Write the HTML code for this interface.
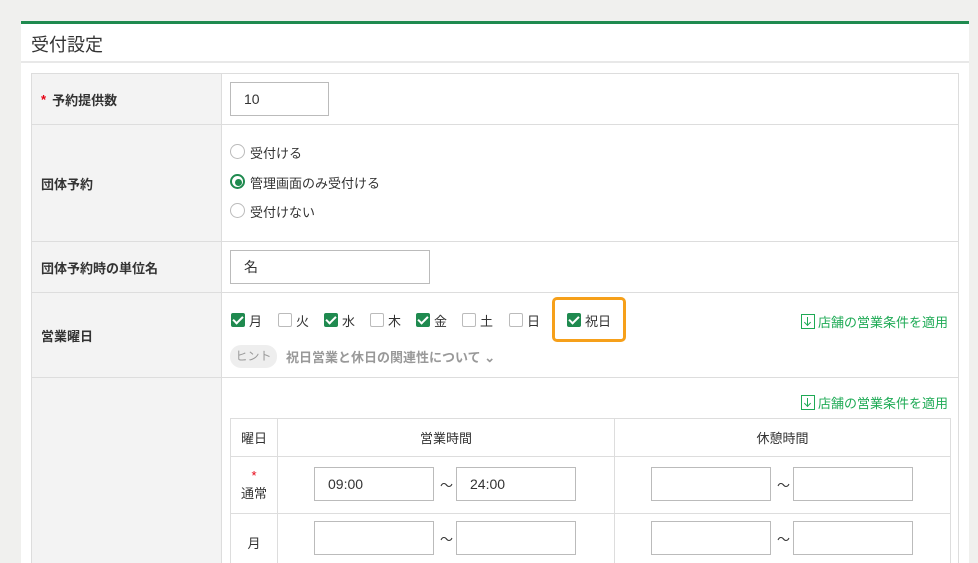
<!DOCTYPE html>
<html><head><meta charset="utf-8"><style>
*{box-sizing:border-box;margin:0;padding:0}
html,body{width:978px;height:563px;overflow:hidden}
body{background:#f0f0ee;font-family:"Liberation Sans","Noto Sans CJK JP",sans-serif;font-size:13px;color:#333;position:relative}
.abs{position:absolute}
.card{left:21px;top:21px;width:948px;height:542px;background:#fff;border-top:3px solid #1f8a4f}
.title{left:31px;top:31px;font-size:18px;color:#333}
.sep{left:21px;top:61px;width:948px;height:2px;background:#e8e8e8}
.lab{background:#f3f3f3;border:1px solid #ddd;font-weight:bold;font-size:13px;display:flex;align-items:center;padding-left:9px}
.val{border:1px solid #ddd;border-left:none}
.inp{border:1px solid #bbb;background:#fff;font-size:14px;padding-left:13px;display:flex;align-items:center}
.radio{width:15px;height:15px;border:1.5px solid #bbb;border-radius:50%}
.cb{width:14px;height:14px;border:1.5px solid #bbb;border-radius:2px}
.cbon{width:14px;height:14px;background:#1f8a4f;border-radius:2px}
.cbon:after{content:"";position:absolute;left:4px;top:1px;width:4px;height:8px;border:solid #fff;border-width:0 2px 2px 0;transform:rotate(45deg)}
.link{color:#1eaa55;font-size:13px;display:flex;align-items:center}
.lico{display:inline-block;width:14px;height:15px;border:1.5px solid #1eaa55;margin-right:3px;position:relative}
.lico:before{content:"";position:absolute;left:4.5px;top:2px;width:1.5px;height:8px;background:#1eaa55}
.lico:after{content:"";position:absolute;left:2.5px;top:5px;width:4px;height:4px;border:solid #1eaa55;border-width:0 1.5px 1.5px 0;transform:rotate(45deg)}
td{border:1px solid #ddd;text-align:center}
</style></head><body>
<div class="abs card"></div>
<div class="abs title">受付設定</div>
<div class="abs sep"></div>

<div class="abs lab" style="left:31px;top:73px;width:191px;height:52px"><span style="color:#e60012;margin-right:6px">*</span>予約提供数</div>
<div class="abs val" style="left:221px;top:73px;width:738px;height:52px"></div>
<div class="abs inp" style="left:230px;top:82px;width:99px;height:34px">10</div>

<div class="abs lab" style="left:31px;top:124px;width:191px;height:118px">団体予約</div>
<div class="abs val" style="left:221px;top:124px;width:738px;height:118px"></div>
<div class="abs radio" style="left:230px;top:144px"></div><div class="abs" style="left:250px;top:143px">受付ける</div>
<div class="abs radio" style="left:230px;top:174px;border-color:#1f8a4f;border-width:2px"><div style="position:absolute;left:2.5px;top:2.5px;width:7px;height:7px;border-radius:50%;background:#1f8a4f"></div></div><div class="abs" style="left:250px;top:173px">管理画面のみ受付ける</div>
<div class="abs radio" style="left:230px;top:203px"></div><div class="abs" style="left:250px;top:202px">受付けない</div>

<div class="abs lab" style="left:31px;top:241px;width:191px;height:52px">団体予約時の単位名</div>
<div class="abs val" style="left:221px;top:241px;width:738px;height:52px"></div>
<div class="abs inp" style="left:230px;top:250px;width:200px;height:34px">名</div>

<div class="abs lab" style="left:31px;top:292px;width:191px;height:86px">営業曜日</div>
<div class="abs val" style="left:221px;top:292px;width:738px;height:86px"></div>
<div class="abs cbon" style="left:231px;top:313px"></div><div class="abs" style="left:249px;top:311px">月</div>
<div class="abs cb" style="left:278px;top:313px"></div><div class="abs" style="left:296px;top:311px">火</div>
<div class="abs cbon" style="left:324px;top:313px"></div><div class="abs" style="left:342px;top:311px">水</div>
<div class="abs cb" style="left:370px;top:313px"></div><div class="abs" style="left:388px;top:311px">木</div>
<div class="abs cbon" style="left:416px;top:313px"></div><div class="abs" style="left:434px;top:311px">金</div>
<div class="abs cb" style="left:462px;top:313px"></div><div class="abs" style="left:480px;top:311px">土</div>
<div class="abs cb" style="left:509px;top:313px"></div><div class="abs" style="left:527px;top:311px">日</div>
<div class="abs" style="left:552px;top:297px;width:74px;height:45px;border:3px solid #f6a01a;border-radius:5px"></div>
<div class="abs cbon" style="left:567px;top:313px"></div><div class="abs" style="left:585px;top:311px">祝日</div>
<div class="abs link" style="left:801px;top:312px"><span class="lico"></span>店舗の営業条件を適用</div>
<div class="abs" style="left:230px;top:345px;width:47px;height:23px;border-radius:11px;background:#eee;color:#999;font-size:12px;line-height:23px;text-align:center">ヒント</div>
<div class="abs" style="left:286px;top:347px;color:#999;font-weight:bold;font-size:13px">祝日営業と休日の関連性について ⌄</div>

<div class="abs lab" style="left:31px;top:377px;width:191px;height:200px"></div>
<div class="abs val" style="left:221px;top:377px;width:738px;height:200px"></div>
<div class="abs link" style="left:801px;top:393px"><span class="lico"></span>店舗の営業条件を適用</div>
<table class="abs" style="left:230px;top:418px;width:721px;border-collapse:collapse;font-size:13px">
<tr style="height:38px"><td style="width:47px">曜日</td><td style="width:337px">営業時間</td><td>休憩時間</td></tr>
<tr style="height:57px"><td><span style="color:#e60012">*</span><br>通常</td><td></td><td></td></tr>
<tr style="height:57px"><td>月</td><td></td><td></td></tr>
</table>
<div class="abs inp" style="left:314px;top:467px;width:120px;height:34px">09:00</div>
<div class="abs" style="left:440px;top:475px">～</div>
<div class="abs inp" style="left:456px;top:467px;width:120px;height:34px">24:00</div>
<div class="abs inp" style="left:651px;top:467px;width:120px;height:34px"></div>
<div class="abs" style="left:777px;top:475px">～</div>
<div class="abs inp" style="left:793px;top:467px;width:120px;height:34px"></div>
<div class="abs inp" style="left:314px;top:521px;width:120px;height:34px"></div>
<div class="abs" style="left:440px;top:529px">～</div>
<div class="abs inp" style="left:456px;top:521px;width:120px;height:34px"></div>
<div class="abs inp" style="left:651px;top:521px;width:120px;height:34px"></div>
<div class="abs" style="left:777px;top:529px">～</div>
<div class="abs inp" style="left:793px;top:521px;width:120px;height:34px"></div>
</body></html>
